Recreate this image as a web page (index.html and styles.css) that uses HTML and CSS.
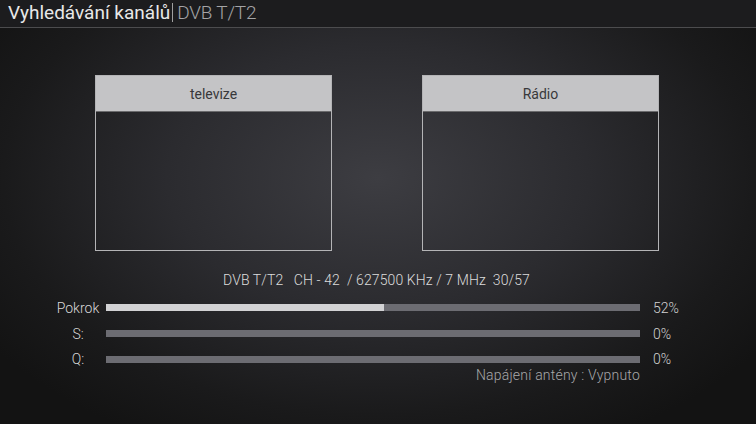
FILE: index.html
```html
<!DOCTYPE html>
<html lang="cs">
<head>
<meta charset="utf-8">
<title>Vyhledávání kanálů</title>
<link rel="stylesheet" href="styles.css">
</head>
<body>
<div class="screen">
  <header class="topbar">
    <span class="title">Vyhledávání kanálů</span><span class="sep"></span><span class="subtitle">DVB T/T2</span>
  </header>
  <main class="content">
    <div class="lists">
      <section class="list">
        <div class="list-head">televize</div>
        <div class="list-body"></div>
      </section>
      <section class="list">
        <div class="list-head">Rádio</div>
        <div class="list-body"></div>
      </section>
    </div>
    <div class="info">DVB T/T2&nbsp;&nbsp;&nbsp;CH - 42&nbsp;&nbsp;/ 627500 KHz / 7 MHz&nbsp;&nbsp;30/57</div>
    <div class="meters">
      <div class="meter">
        <span class="m-label">Pokrok</span>
        <div class="track"><div class="fill" style="width:52%"></div></div>
        <span class="m-value">52%</span>
      </div>
      <div class="meter">
        <span class="m-label">S:</span>
        <div class="track"><div class="fill" style="width:0%"></div></div>
        <span class="m-value">0%</span>
      </div>
      <div class="meter">
        <span class="m-label">Q:</span>
        <div class="track"><div class="fill" style="width:0%"></div></div>
        <span class="m-value">0%</span>
      </div>
      <div class="power">Napájení antény : Vypnuto</div>
    </div>
  </main>
</div>
</body>
</html>
```
FILE: styles.css
```css
* { box-sizing: border-box; }
html, body { margin: 0; padding: 0; }
body {
  width: 756px;
  height: 424px;
  overflow: hidden;
  font-family: Roboto, "Liberation Sans", sans-serif;
  font-weight: 300;
  background: #151515;
}
.screen {
  width: 756px;
  height: 424px;
  display: flex;
  flex-direction: column;
  background: radial-gradient(ellipse 62% 70% at 50% 42%, #3d3d42 0%, #2b2b2f 45%, #1a1a1b 80%, #131313 100%);
}
.topbar {
  height: 28px;
  background: #1c1c1e;
  border-bottom: 1px solid #4c4c4e;
  display: flex;
  align-items: center;
  padding: 0 0 2px 8px;
  flex: none;
}
.title {
  font-size: 19px;
  font-weight: 400;
  color: #e8e8e8;
}
.sep {
  width: 1px;
  height: 19px;
  background: #a0a0a0;
  margin: 0 4px 0 2px;
}
.subtitle {
  font-size: 19px;
  font-weight: 300;
  color: #a4a4a6;
  letter-spacing: -0.2px;
}
.content {
  flex: 1;
  display: flex;
  flex-direction: column;
}
.lists {
  display: flex;
  justify-content: center;
  gap: 90px;
  margin-top: 47px;
  padding-right: 2px;
}
.list {
  width: 237px;
  height: 176px;
  border: 1.5px solid #b4b4b6;
  display: flex;
  flex-direction: column;
}
.list-head {
  height: 36px;
  background: #c4c4c6;
  color: #38383a;
  font-size: 14px;
  font-weight: 400;
  display: flex;
  align-items: center;
  justify-content: center;
  border-bottom: 1.5px solid #6a6a6c;
  flex: none;
}
.list-body { flex: 1; }
.info {
  margin-top: 21px;
  text-align: center;
  font-size: 14px;
  color: #dcdcdc;
  padding-right: 3px;
  line-height: 17px;
  letter-spacing: 0.1px;
}
.meters {
  margin-top: 6px;
  display: flex;
  flex-direction: column;
}
.meter {
  display: flex;
  align-items: center;
  height: 25.7px;
  padding-left: 54px;
}
.m-label {
  width: 52px;
  text-align: center;
  font-size: 14px;
  color: #d8d8d8;
  padding-right: 4px;
}
.track {
  width: 534px;
  height: 7px;
  background: #6c6c72;
}
.fill {
  height: 100%;
  background: #d2d2d4;
}
.m-value {
  margin-left: 13px;
  font-size: 14px;
  color: #d2d2d2;
}
.power {
  width: 640px;
  text-align: right;
  font-size: 14px;
  color: #a8a8aa;
  margin-top: -5px;
  line-height: 17px;
  letter-spacing: 0.2px;
}
```
